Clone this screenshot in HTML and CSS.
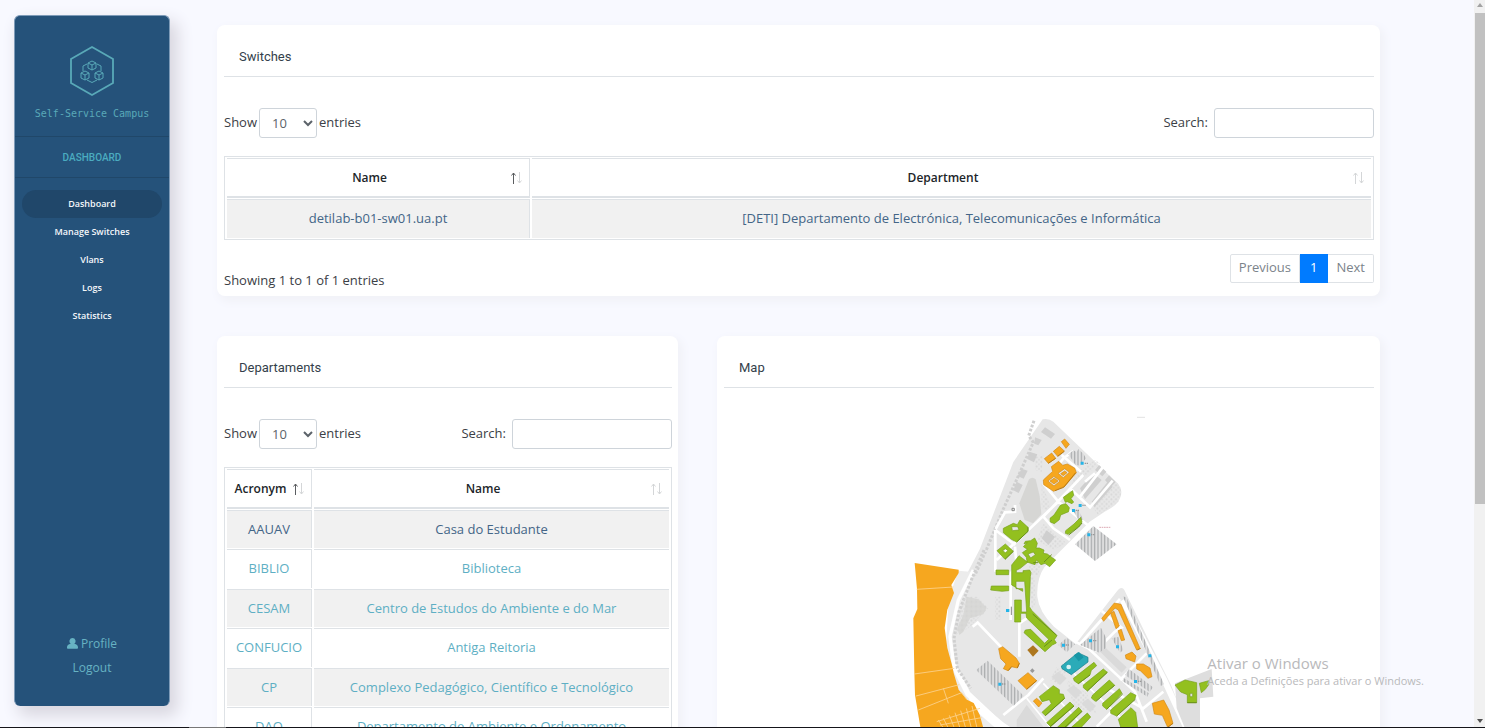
FILE: index.html
```html
<!DOCTYPE html>
<html lang="en">
<head>
<meta charset="utf-8">
<title>Self-Service Campus</title>
<link rel="stylesheet" href="styles.css">
</head>
<body>
<svg class="symbols" aria-hidden="true">
  <symbol id="sort-up" viewBox="0 0 5 12"><path d="M2.500 12V1M.5 3.500 2.500 1l2 2.500" fill="none" stroke="currentColor"/></symbol>
  <symbol id="sort-down" viewBox="0 0 5 12"><path d="M2.500 0v11M.5 8.500 2.500 11l2-2.500" fill="none" stroke="currentColor"/></symbol>
</svg>
<div class="app">
  <aside class="sidebar">
    <div class="brand">
      <svg class="logo" viewBox="0 0 46 52" fill="none" stroke="#59a9b8" aria-hidden="true">
        <path d="M23 2 44 14v24L23 50 2 38V14z" stroke-width="1.8"/>
        <g stroke-width="1">
          <path d="M23 16l4 2v5l-4 2-4-2v-5zM19 18l4 2 4-2M23 20v5"/>
          <path d="M16 26l4 2v5l-4 2-4-2v-5zM12 28l4 2 4-2M16 30v5"/>
          <path d="M30 26l4 2v5l-4 2-4-2v-5zM26 28l4 2 4-2M30 30v5"/>
          <path d="M18 19l-4 2v5M28 19l4 2v5M18 35l5 2.500 5-2.500"/>
        </g>
      </svg>
      <span class="brand-name">Self-Service Campus</span>
    </div>
    <h1 class="section-name">DASHBOARD</h1>
    <nav class="menu">
      <a class="menu-item active" href="#">Dashboard</a>
      <a class="menu-item" href="#">Manage Switches</a>
      <a class="menu-item" href="#">Vlans</a>
      <a class="menu-item" href="#">Logs</a>
      <a class="menu-item" href="#">Statistics</a>
    </nav>
    <div class="account">
      <a href="#"><svg class="user" viewBox="0 0 12 12" aria-hidden="true"><path fill="currentColor" d="M6 0a3.500 3.500 0 0 1 2 6.300C10.500 6.800 12 8 12 10v.6c0 .8-.5 1.200-1.200 1.200H1.200C.5 11.800 0 11.400 0 10.600V10c0-2 1.500-3.200 4-3.700A3.500 3.500 0 0 1 6 0z"/></svg>Profile</a>
      <a href="#">Logout</a>
    </div>
  </aside>

  <main class="content">
    <section class="card">
      <h2 class="card-title">Switches</h2>
      <div class="controls">
        <label class="length">Show <select><option>10</option><option>25</option></select> entries</label>
        <label class="search">Search:<input type="search"></label>
      </div>
      <table class="data switches">
        <thead><tr>
          <th><button class="sort">Name<span class="arrows"><svg class="on"><use href="#sort-up"/></svg><svg><use href="#sort-down"/></svg></span></button></th>
          <th><button class="sort">Department<span class="arrows"><svg><use href="#sort-up"/></svg><svg><use href="#sort-down"/></svg></span></button></th>
        </tr></thead>
        <tbody><tr class="visited">
          <td><a href="#">detilab-b01-sw01.ua.pt</a></td>
          <td><a href="#">[DETI] Departamento de Electrónica, Telecomunicações e Informática</a></td>
        </tr></tbody>
      </table>
      <div class="footer">
        <p class="info">Showing 1 to 1 of 1 entries</p>
        <div class="pages"><button>Previous</button><button class="current">1</button><button>Next</button></div>
      </div>
    </section>

    <div class="columns">
      <section class="card">
        <h2 class="card-title">Departaments</h2>
        <div class="controls">
          <label class="length">Show <select><option>10</option><option>25</option></select> entries</label>
          <label class="search">Search:<input type="search"></label>
        </div>
        <table class="data departments">
          <thead><tr>
            <th><button class="sort">Acronym<span class="arrows"><svg class="on"><use href="#sort-up"/></svg><svg><use href="#sort-down"/></svg></span></button></th>
            <th><button class="sort">Name<span class="arrows"><svg><use href="#sort-up"/></svg><svg><use href="#sort-down"/></svg></span></button></th>
          </tr></thead>
          <tbody>
            <tr class="visited"><td><a href="#">AAUAV</a></td><td><a href="#">Casa do Estudante</a></td></tr>
            <tr><td><a href="#">BIBLIO</a></td><td><a href="#">Biblioteca</a></td></tr>
            <tr><td><a href="#">CESAM</a></td><td><a href="#">Centro de Estudos do Ambiente e do Mar</a></td></tr>
            <tr><td><a href="#">CONFUCIO</a></td><td><a href="#">Antiga Reitoria</a></td></tr>
            <tr><td><a href="#">CP</a></td><td><a href="#">Complexo Pedagógico, Científico e Tecnológico</a></td></tr>
            <tr><td><a href="#">DAO</a></td><td><a href="#">Departamento de Ambiente e Ordenamento</a></td></tr>
          </tbody>
        </table>
      </section>

      <section class="card">
        <h2 class="card-title">Map</h2>
        <svg class="map" viewBox="-528 -36 1950 1020" role="img" aria-label="Campus map">
          <defs>
            <pattern id="park" width="10" height="10" patternUnits="userSpaceOnUse"><path fill="#e4e4e4" d="M0 0h10v10H0z"/><path fill="#a9abad" d="M2 0h4v10H2z"/></pattern>
            <pattern id="trees" width="14" height="14" patternUnits="userSpaceOnUse"><circle cx="4" cy="4" r="3" fill="#d2d2d2"/><circle cx="11" cy="11" r="3" fill="#dadada"/></pattern>
          </defs>
          <!-- ground -->
          <path fill="#e7e7e7" d="M428 58q18-4 32 7L655 252q16 20 4 45-8 20-45 38l-45 30-135 135q-25 35-22 90 5 45 50 90l65 52 125-160 5-5q10-8 16 3l80 165 60 120 50 126H320l-30-30-80-75-45-90-12-70 30-160 57-110 100-260z"/>
          <path fill="#ececec" d="M175 512l50 5-40 100-30 60 6 120 60 130 80 70 20 30h-75l-30-70-55-120-25-60 10-180z"/>
          <path fill="none" stroke="#fff" stroke-width="10" d="M220 510l-45 90-25 110 12 95 40 80 110 90 30 20"/>
          <path fill="none" stroke="#cfcfcf" stroke-width="9" stroke-dasharray="8 5" d="M402 62l-16 45 14 20-40 90-50 110-50 120-36 80M252 450l-40 95-35 90-15 80 10 90 40 60"/>
          <path fill="#d6d6d4" d="M387 238q10-10 20 0l12 50 5 55-25 27-25-10-16-50z"/>
          <path fill="#d8d8d6" d="M200 590l35 8 25 25-10 20-40 12-20 40-12 10-6-20 18-40z"/>
          <path fill="url(#trees)" opacity=".8" d="M190 590h45l30 35-60 60-40 20zM285 590h18v70h-18zM405 170l25-5-5 50-20-5zM425 250l20 50 10 35-30-10zM430 370l70 60-40 20-50-30zM525 220l60-40 15 10-90 80zM580 325l70-80 15 30-10 30-60 40zM385 530h18l5 80-12 20zM385 480h40l-10 45h-25zM470 800l30 15-20 40-30-15zM500 840l60 40 30 60-70-20z"/>
          <path fill="#cfcfcf" d="M435 82l30 20-12 14-30-20zM405 112l20 8-10 16-12-5zM388 155l24 8-10 24-20-10zM365 206l18 6-12 24-18-8zM350 245l18 10-12 24-16-8zM540 265l40-45 25 20-50 58zM575 305l48-60 15 15-55 62zM585 210l12-15 22 20-12 14zM615 240l12-14 20 20-14 15zM425 415l15-24 25 20-20 24z"/>
          <!-- roads -->
          <g fill="none" stroke="#fff" stroke-width="8">
            <path d="M485 165l58 50M445 235l45-60 30-22M430 250l45 55 100 80M430 350l120-125M475 305L290 480M286 390l60 45M345 315v20l-30 2-28 50M286 390v125M430 350l30 35 50 35M510 265l60 57 68-80M540 290l70-90M555 245l30-25M345 440l5 60-18 20v140M358 770V670l30-20M218 680l15-12 110 115M310 945l75-60 45-50"/>
            <path d="M525 725l40 20 140 130 35 90M540 732l120-135M585 755l60-60 20-12-60-50M660 840l80-80M620 865l110 60 60-50M700 590l80 170M640 930l-50 50"/>
            <path stroke-width="18" d="M668 600l125 240 78 170"/>
            <path stroke-width="5" d="M380 895l70 85M430 850l120 130M490 790l200 190"/>
          </g>
          <path fill="#dadada" d="M595 750l15-13 70 65-15 16zM350 960l30-45 50 65h-80zM455 830l20-15 25 20-20 20zM500 870l20-14 25 20-18 20zM545 910l18-14 25 22-18 18z"/>
          <path fill="#dedede" d="M825 850l110-43 5 83-40 5v90h-45l-25-60z"/>
          <!-- car parks -->
          <g fill="url(#park)">
            <path d="M505 163l15-12 10 6 5-10 15 14 8 14-18 22-14-3zM580 378l70 55-65 50-60-50zM475 735l25-22 25 20-25 24zM540 735l63-52 15 30v30l-20 15zM228 810l35-28 108 105-30 30zM668 588l12 5 112 260-10 5zM675 825l12-18 72 55-10 14zM667 843l5-8 75 45-5 10zM520 333l15-4 15 30-12 5zM635 715l20-5 15 40-10 8z"/>
          </g>
          <!-- orange fields -->
          <path fill="#f6a71f" d="M44 489l132 20v10l-22 36 8 24-20 50-8 55 8 60 15 55 4 20 15 50 25 30 20 10 18 35 10 36v25H65L45 885l-2-70-3-160 12-28-1-60z"/>
          <g fill="none" stroke="#fbd290" stroke-width="2.500"><path d="M50 568l110-7M43 822l120-17M48 888l130-34M55 930l130-52 15 20M130 865l15 45M110 965l130-40M115 960l15 24M130 955l15 29M148 946l15 38M165 938l15 46M182 932l15 52M199 925l15 59M216 918l15 66M120 975l125-22"/></g>
          <!-- green buildings -->
          <g stroke-linejoin="round">
            <g fill="#93c01f" stroke="#76a01b" stroke-width="2">
              <path d="M490 292l28-20 3 14-8 10 8 10-5 5-14-6-6 2zM450 355l12-10 20-30 16-4 10 12-2 12-24 10-4 14-15 12-12-5zM497 392l25-20 20-20 4 14-10 14-32 23-8-3z"/>
              <path fill-rule="evenodd" d="M310 385l30-15 12 4 8-14 24 22v12l-34 32-16-8-24-20zM335 380l2 12 20-2-4-10zM291 452l25-20 24 22-25 24zM308 452l8 6 8-6-8-6z"/>
              <path fill-rule="evenodd" d="M370 440l12-12-10 4 4-8 16-2 12-8 8 16-4 14h10l14 6-2 10 12 2 16 12 9 6-18 20-14-10-12 4-14-14-4 14-24-8-2-14-12-14 15-10zM384 462l8 12 14-10-6-8z"/>
              <path d="M335 555v-60l22-28 26 20-22 18-12 6v7h20v-6l20-2 4 8-2 12-3 90 8 12 75 75-8 12 6 10-12 6-22 20-63-57 4-8 16-2 42 42 12-12-66-64-2-14h-16v26h-18v-66h20v36h16l-6-92h-26v22h20v8zM288 510h38v14h-38zM274 558h52v14l-20 2-34-4z"/>
              <path d="M418 890l42-33 18 12v12l12 2 4 12-58 52-10-10 28-26-6-12-22 6zM440 968l70-62 12 12-70 62zM470 984l66-62 10 12-50 50zM512 984l50-45 10 12-30 33zM520 835l62-48 8 10-16 14-4 14-35 26-12-8zM550 855l60-48 12 10-60 56-12-10zM578 885l50-45 16 16-58 48-12-10zM608 910l50-44 8 14-46 48-12-10zM632 930l60-52 16 8-4 12-54 50-18-8zM655 958l38-35 14 14 6 45-50 2z"/>
              <path fill-rule="evenodd" d="M825 855l30-15 35 8v60h-28v-24l-20-8zM870 880v10h8v-10zM898 850l28-8v12l-10 14-12 10z"/>
            </g>
            <!-- orange buildings -->
            <g fill="#f6a71f" stroke="#d08a18" stroke-width="2">
              <path d="M433 176l22-17 12 16-22 15zM460 154l18-15 15 14-20 16zM484 125l10-8 14 16-10 12z"/>
              <path d="M430 240l28-26-4-14 22-16 12 12 14-4 22 12 5 14-36 42-12 4-20 10-30-20z"/>
              <path fill="#e7e7e7" d="M444 243l18-14 18 14-18 15zM474 220l20-14 14 11-18 16z"/>
              <path d="M450 243l13-9 11 9-12 9zM482 221l12-8 7 5-11 9z"/>
              <path d="M296 746l12-6 40 34 10 16-6 14-18-4-10 12-14-6 8-14-16-16zM354 842l30-24 26 24-30 26zM400 903l10-8 16 14-10 12z"/>
              <path d="M605 655l38-46 20 4 10 24 47 108-10 5-55-120-10-6-34 40zM632 640l10-6 16 44-10 8zM654 692l10-4 10 32-10 2zM676 765l20-9 12 12-4 18-26-10zM710 792l20 0 20 12 6 26-12 5-22-22-12-6zM757 910l34-10 16 30 12 40-16 12-16-36-24-4z"/>
            </g>
            <path fill="#ad771f" d="M382 750l17-14 17 16-17 18z"/>
            <path fill="#2babb8" stroke="#177c88" stroke-width="2" d="M484 798l50-40 30 14v14l-50 38-28-18z"/>
            <path fill="#1796a6" d="M521 766l16-10 14 16-15 12z"/><circle cx="506" cy="801" r="7" fill="#d9f2f4"/>
          </g>
          <g fill="none" stroke-width="3">
            <path stroke="#6a921a" d="M350 426l34-32v-12M315 478l25-24M436 947l58-52M450 980l72-62M492 984l54-50M535 851l35-26M562 873l60-56M588 904l56-48M620 928l48-46M650 948l56-50M400 488l14 0M432 486l23-22M506 405l30-24 10-12M398 642l72 64M432 740l24-20M862 908h28"/>
            <path stroke="#b87a14" d="M445 190l22-15M473 169l20-15M465 272l26-10 36-44M380 868l30-26M712 750l10-5M803 982l16-12M358 790l-6 14M335 800l-10 12"/>
          </g>
          <g fill="#24b4e8"><path d="M542 185h9v9h-9zM536 312h9v9h-9zM516 327h9v9h-9zM562 400h9v9h-9zM318 627h10v9h-10zM486 731h9v9h-9zM567 718h9v9h-9zM648 736h9v9h-9zM702 840h9v9h-9zM745 763h9v9h-9zM295 848h9v9h-9z"/></g>
          <path stroke="#999" stroke-width="4" stroke-dasharray="4 2" fill="none" d="M554 190h11M547 316h11M527 331h10M573 404h12M306 852h12M497 735h10M579 722h10M714 844h10"/>
          <path stroke="#dcaab4" stroke-width="3" stroke-dasharray="5 2" d="M598 382h33"/>
          <path stroke="#e2e2e2" stroke-width="3" d="M711 52h24"/>
          <path fill="#999" d="M390 812l7-7 7 7-7 7z"/>
          <path fill="none" stroke="#888" stroke-width="3" d="M334 620v25M336 325h7v7h-7z"/>
        </svg>
      </section>
    </div>
  </main>
  <div class="scrollbar" aria-hidden="true"><span class="arrow up"></span><span class="thumb"></span><span class="arrow down"></span></div>
  <div class="watermark"><p class="notice">Ativar o Windows</p><p>Aceda a Definições para ativar o Windows.</p></div>
  <div class="taskbar"></div>
</div>
</body>
</html>
```
FILE: styles.css
```css
* { box-sizing: border-box; }
body {
  margin: 0;
  background: #f8f9ff;
  color: #3b4046;
  font: 13px/1.5 "Open Sans", sans-serif;
}
h1, h2, p { margin: 0; font-weight: 400; }
a { color: #5eafc4; text-decoration: none; }
button, input, select { font: inherit; color: inherit; }
.symbols { display: none; }

.app { display: flex; height: 100vh; overflow: hidden; position: relative; }

.sidebar {
  display: flex;
  flex-direction: column;
  flex: none;
  width: 156px;
  margin: 15px 0 22px 14px;
  border: 1px solid #7e9bb8;
  border-width: 1px 1px 0;
  border-radius: 6px;
  background: #25527a;
  box-shadow: 6px 8px 16px 2px #d9d7e0;
  text-align: center;
}
.brand {
  display: flex;
  flex-direction: column;
  align-items: center;
  gap: 8px;
  height: 121px;
  padding-top: 29px;
  border-bottom: 1px solid #204769;
}
.logo { width: 46px; height: 52px; }
.brand-name { color: #59a9b8; font: 10px/18px "DejaVu Sans Mono", monospace; }
.section-name {
  padding-top: 2px;
  color: #4bacc0;
  font: 500 10px/38px Roboto, sans-serif;
  border-bottom: 1px solid #204769;
}
.menu { display: flex; flex-direction: column; padding: 12px 7px; }
.menu-item { color: #f4f7fa; font-size: 9px; font-weight: 600; line-height: 28px; border-radius: 14px; }
.menu-item.active { background: #20476a; }
.account { display: flex; flex-direction: column; margin-top: auto; padding-bottom: 26px; }
.account a { color: #67b3c3; font-size: 12px; font-weight: 500; line-height: 24px; }
.user { width: 11px; height: 11px; margin-right: 3px; vertical-align: -1px; }

.content { flex: 1; min-width: 0; padding: 25px 94px 0 47px; }
.card {
  min-width: 0;
  padding: 0 6px 13px 7px;
  border-radius: 8px;
  background: #fff;
  box-shadow: 3px 4px 8px 2px #f1f2f8;
}
.card-title {
  padding: 22px 15px 9px;
  border-bottom: 1px solid #dee2e6;
  color: #343f4b;
  font: 13px/20px Roboto, sans-serif;
}
.columns {
  display: grid;
  grid-template-columns: 461fr 663fr;
  gap: 39px;
  margin-top: 40px;
}

.controls { display: flex; justify-content: space-between; margin: 31px 0 18px; }
.length, .search { display: flex; align-items: center; }
.length { gap: 2px; }
.search { gap: 6px; }
.controls select, .controls input {
  height: 30px;
  border: 1px solid #ced4da;
  border-radius: 3px;
  background: #fff;
  color: #5c636a;
}
.controls select { width: 58px; padding-left: 8px; }
.controls input { width: 160px; padding: 0 6px; }

.data {
  width: 100%;
  border: 1px solid #dee2e6;
  border-spacing: 2px 1px;
  border-collapse: separate;
  table-layout: fixed;
  text-align: center;
}
.data th, .data td { padding: 9px 0; border-top: 1px solid #dee2e6; border-right: 1px solid #dee2e6; }
.data th { padding-bottom: 8px; border-bottom: 2px solid #dee2e6; color: #212529; }
.data th:last-child, .data td:last-child { border-right: 0; }
.data tbody tr:nth-child(odd) td { background: #f1f1f1; }
.visited a { color: #436587; }
.switches th:first-child { width: 303px; }
.departments th:first-child { width: 85px; }
.sort {
  display: flex;
  align-items: center;
  justify-content: center;
  width: 100%;
  padding: 0 7px 0 1px;
  border: 0;
  background: none;
  font-size: 12px;
  font-weight: 600;
  line-height: 20px;
}
.sort::before { content: ""; margin-right: auto; }
.arrows { display: flex; gap: 1px; margin-left: auto; color: #d4d6d8; }
.arrows svg { width: 5px; height: 12px; }
.arrows .on { color: #5a5d60; }

.footer { display: flex; justify-content: space-between; align-items: flex-start; padding-top: 14px; }
.info { padding-top: 16px; line-height: 20px; margin-bottom: -7px; }
.pages { display: flex; }
.pages button {
  height: 29px;
  padding: 0 8px;
  border: 1px solid #dee2e6;
  border-left-width: 0;
  background: #fff;
  color: #7b838a;
}
.pages button:first-child { border-left-width: 1px; border-radius: 2px 0 0 2px; }
.pages button:last-child { border-radius: 0 2px 2px 0; }
.pages button.current { padding: 0 10px; background: #007bff; border-color: #007bff; color: #fff; }

.map { display: block; width: 100%; }

.scrollbar {
  display: flex;
  flex-direction: column;
  align-items: center;
  flex: none;
  width: 11px;
  background: #f1f1f1;
}
.thumb { width: 10px; height: 491px; margin: 6px 0 auto; background: #c1c1c1; }
.arrow { border: 3px solid transparent; }
.arrow.up { margin-top: 3px; border-top: 0; border-bottom: 4px solid #a3a3a3; }
.arrow.down { margin-bottom: 5px; border-bottom: 0; border-top: 4px solid #505050; }

.watermark { position: absolute; right: 61px; bottom: 39px; color: #b9b9bb; font-size: 11px; line-height: 17px; }
.notice { font-size: 15px; line-height: 18px; }
.taskbar {
  position: absolute;
  inset: auto 0 0;
  height: 1px;
  background: linear-gradient(90deg, #15151a 189px, #777 189px, #777 226px, #15151a 226px);
}
```
